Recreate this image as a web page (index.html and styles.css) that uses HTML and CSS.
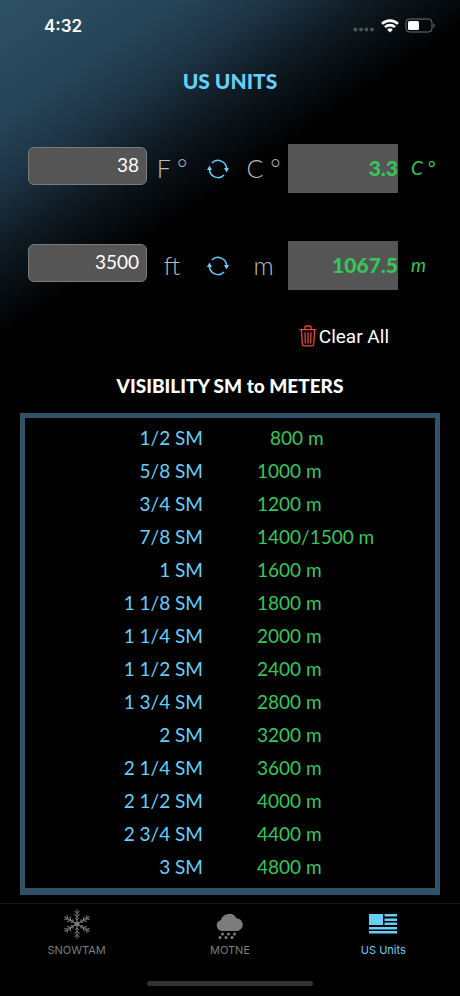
FILE: index.html
```
<!DOCTYPE html>
<html lang="en">
<head>
  <meta charset="UTF-8" />
  <meta name="viewport" content="width=device-width, initial-scale=1" />
  <title>US Units</title>
  <link rel="stylesheet" href="styles.css">
</head>
<body>

<header class="status-bar">
  <span class="clock">4:32</span>
  <div class="status-icons">
    <svg class="signal" width="22" height="5" viewBox="0 0 22 5" fill="#4c5459">
      <circle cx="2.5" cy="2.5" r="2" /><circle cx="8" cy="2.5" r="2" />
      <circle cx="13.5" cy="2.5" r="2" /><circle cx="19" cy="2.5" r="2" />
    </svg>
    <svg width="18" height="14" viewBox="0 0 18 14" fill="none" stroke="#fff" stroke-width="2.6">
      <path d="M1 4.9a11.4 11.4 0 0 1 16 0" />
      <path d="M4 8.2a7.1 7.1 0 0 1 10 0" />
      <path d="M9 13.6 6.2 10.7a4 4 0 0 1 5.6 0z" fill="#fff" stroke="none" />
    </svg>
    <svg width="31" height="15" viewBox="0 0 31 15">
      <rect x="1" y="1" width="26" height="13" rx="3.5" fill="none" stroke="#6f7375" />
      <rect x="3" y="3" width="11" height="9" rx="1.5" fill="#fff" />
      <path d="M28.5 5.5v4a2.2 2.2 0 0 0 0-4z" fill="#6f7375" />
    </svg>
  </div>
</header>

<main>
  <h1>US UNITS</h1>

  <form class="converter">
    <div class="convert-row">
      <input type="text" id="temp" value="38" inputmode="decimal">
      <label for="temp">F °</label>
      <button type="button" class="swap" aria-label="Swap temperature units">
        <svg width="22" height="20" viewBox="0 0 22 20">
          <path d="M4.9 4A8.6 8.6 0 0 1 19.6 10M17.1 16A8.6 8.6 0 0 1 2.4 10" fill="none" stroke="#66d0fa" stroke-width="1.5" />
          <path d="M0 11 2.5 6.5 5 11zM17 9h5l-2.5 4.5z" fill="#66d0fa" />
        </svg>
      </button>
      <label for="tempResult">C °</label>
      <output id="tempResult" for="temp">3.3</output>
      <span class="unit">C °</span>
    </div>
    <div class="convert-row">
      <input type="text" id="height" value="3500" inputmode="decimal">
      <label for="height">ft</label>
      <button type="button" class="swap" aria-label="Swap height units">
        <svg width="22" height="20" viewBox="0 0 22 20">
          <path d="M4.9 4A8.6 8.6 0 0 1 19.6 10M17.1 16A8.6 8.6 0 0 1 2.4 10" fill="none" stroke="#66d0fa" stroke-width="1.5" />
          <path d="M0 11 2.5 6.5 5 11zM17 9h5l-2.5 4.5z" fill="#66d0fa" />
        </svg>
      </button>
      <label for="heightResult">m</label>
      <output id="heightResult" for="height">1067.5</output>
      <span class="unit">m</span>
    </div>
    <button type="reset" class="clear">
      <svg width="18" height="22" viewBox="0 0 18 22" fill="none" stroke="#e8473a" stroke-width="1.3" stroke-linecap="round">
        <path d="M1 4.6h16M5.8 4.4V2.6A1.6 1.6 0 0 1 7.4 1h3.2a1.6 1.6 0 0 1 1.6 1.6v1.8" />
        <path d="M2.4 4.8 3.3 19a2 2 0 0 0 2 1.9h7.4a2 2 0 0 0 2-1.9l.9-14.2M6 8l.3 10M9 8v10M12 8l-.3 10" />
      </svg>
      Clear All
    </button>
  </form>

  <h2 id="visibility">VISIBILITY SM to METERS</h2>

  <div class="table-frame">
    <table aria-labelledby="visibility">
      <tbody>
        <tr><th scope="row">1/2 SM</th><td class="short">800 m</td></tr>
        <tr><th scope="row">5/8 SM</th><td>1000 m</td></tr>
        <tr><th scope="row">3/4 SM</th><td>1200 m</td></tr>
        <tr><th scope="row">7/8 SM</th><td>1400/1500 m</td></tr>
        <tr><th scope="row">1 SM</th><td>1600 m</td></tr>
        <tr><th scope="row">1 1/8 SM</th><td>1800 m</td></tr>
        <tr><th scope="row">1 1/4 SM</th><td>2000 m</td></tr>
        <tr><th scope="row">1 1/2 SM</th><td>2400 m</td></tr>
        <tr><th scope="row">1 3/4 SM</th><td>2800 m</td></tr>
        <tr><th scope="row">2 SM</th><td>3200 m</td></tr>
        <tr><th scope="row">2 1/4 SM</th><td>3600 m</td></tr>
        <tr><th scope="row">2 1/2 SM</th><td>4000 m</td></tr>
        <tr><th scope="row">2 3/4 SM</th><td>4400 m</td></tr>
        <tr><th scope="row">3 SM</th><td>4800 m</td></tr>
      </tbody>
    </table>
  </div>
</main>

<nav class="tab-bar">
  <a href="#snowtam">
    <svg width="28" height="30" viewBox="-14 -15 28 30" fill="none" stroke="currentColor">
      <defs>
        <path id="arm" d="M0 0V-14.5M-2.6-13.2 0-10.5 2.6-13.2M-2.8-9.8 0-7 2.8-9.8M-1.8-6 0-4.2 1.8-6" />
      </defs>
      <use href="#arm" />
      <use href="#arm" transform="rotate(60)" />
      <use href="#arm" transform="rotate(120)" />
      <use href="#arm" transform="rotate(180)" />
      <use href="#arm" transform="rotate(240)" />
      <use href="#arm" transform="rotate(300)" />
      <circle r="2" fill="currentColor" />
    </svg>
    SNOWTAM
  </a>
  <a href="#motne">
    <svg width="28" height="30" viewBox="0 0 28 30" fill="currentColor">
      <path d="M6 22a5.5 5.5 0 0 1-1.2-10.8A8.5 8.5 0 0 1 20.5 9.3 6.4 6.4 0 0 1 21.500 22z" />
      <circle cx="6.5" cy="25" r="1.5" /><circle cx="12.5" cy="25" r="1.5" /><circle cx="18.5" cy="25" r="1.5" />
      <circle cx="4" cy="28.5" r="1.5" /><circle cx="10" cy="28.5" r="1.5" /><circle cx="16" cy="28.5" r="1.5" />
    </svg>
    MOTNE
  </a>
  <a href="#us-units" class="active" aria-current="page">
    <svg width="28" height="30" viewBox="0 0 28 30" fill="currentColor">
      <path d="M0 5h14v11H0zM15.5 5H28v2.5H15.5zM15.5 9.5H28V12H15.5zM15.5 13.5H28V16H15.5zM0 18h28v2.5H0zM0 22h28v2.5H0z" />
    </svg>
    US Units
  </a>
</nav>
<div class="home-indicator"></div>

</body>
</html>
```
FILE: styles.css
```
* {
  box-sizing: border-box;
}
body {
  margin: 0;
  min-height: 100vh;
  display: flex;
  flex-direction: column;
  background: linear-gradient(146deg, #2e5166 0%, #264458 9%, #1e3546 14%, #0f1b24 19%, #000 26%);
  background-color: #000;
  color: #fff;
  font-family: Lato, sans-serif;
}
button {
  padding: 0;
  border: 0;
  background: none;
  cursor: pointer;
}
svg {
  display: block;
}

/* Status bar */
.status-bar {
  display: flex;
  justify-content: space-between;
  align-items: center;
  height: 51px;
  padding: 0 24px 0 44px;
  font: 600 17px Inter, sans-serif;
}
.status-icons {
  display: flex;
  align-items: center;
  gap: 6px;
}
.signal {
  margin-top: 8px;
}

main {
  flex: 1;
}
h1 {
  margin: 15px 0 48px;
  text-align: center;
  font-size: 21px;
  line-height: 30px;
  font-weight: 900;
  color: #66d0fa;
}
h2 {
  margin: 24px 0 12px;
  text-align: center;
  font-size: 19px;
  line-height: 30px;
  font-weight: 900;
}

/* Converter */
.converter {
  display: flex;
  flex-direction: column;
  padding: 0 24px 0 28px;
}
.convert-row {
  display: grid;
  grid-template-columns: 119fr 50fr 42fr 49fr 110fr 38fr;
  align-items: center;
  margin-bottom: 48px;
}
.convert-row input {
  width: 100%;
  min-width: 0;
  height: 38px;
  margin-bottom: 6px;
  padding: 0 7px 3px;
  border: 1px solid #7b7b7b;
  border-radius: 6px;
  background: #555;
  color: #fff;
  font: 19px Lato, sans-serif;
  text-align: right;
}
.convert-row label {
  padding-bottom: 2px;
  text-align: center;
  font-size: 25px;
  font-weight: 300;
  color: #bbb;
}
.convert-row output {
  height: 49px;
  line-height: 47px;
  background: #555;
  color: #34c759;
  font-size: 21px;
  font-weight: 900;
  text-align: right;
}
.swap {
  justify-self: center;
}
.unit {
  min-width: 0;
  padding: 0 0 2px 13px;
  color: #34c759;
  font-size: 19px;
  font-style: italic;
  white-space: nowrap;
}
.clear {
  align-self: flex-end;
  display: flex;
  align-items: center;
  gap: 2px;
  margin: -13px 47px 0 0;
  height: 22px;
  color: #fff;
  font: 19px Roboto, sans-serif;
}

/* Visibility table */
.table-frame {
  margin: 0 20px;
  padding: 3px 0 5px;
  border: 5px solid #305268;
  border-bottom-width: 7px;
}
table {
  width: 100%;
  border-collapse: collapse;
  font-size: 19px;
  line-height: 33px;
}
th {
  width: 50%;
  padding: 0 27px 0 0;
  text-align: right;
  font-weight: 400;
  color: #66d0fa;
}
td {
  padding: 0 0 0 27px;
  color: #34c759;
}
.short {
  padding-left: 40px;
}

/* Tab bar */
.tab-bar {
  display: flex;
  height: 76px;
  padding-top: 5px;
  border-top: 1px solid #161616;
}
.tab-bar a {
  flex: 1;
  display: flex;
  flex-direction: column;
  align-items: center;
  gap: 4px;
  color: #7c7c7c;
  font: 11px Inter, sans-serif;
  text-decoration: none;
}
.tab-bar .active {
  color: #66d0fa;
}
.home-indicator {
  width: 36%;
  height: 5px;
  margin: 2px auto 10px;
  border-radius: 3px;
  background: #333;
}
```
